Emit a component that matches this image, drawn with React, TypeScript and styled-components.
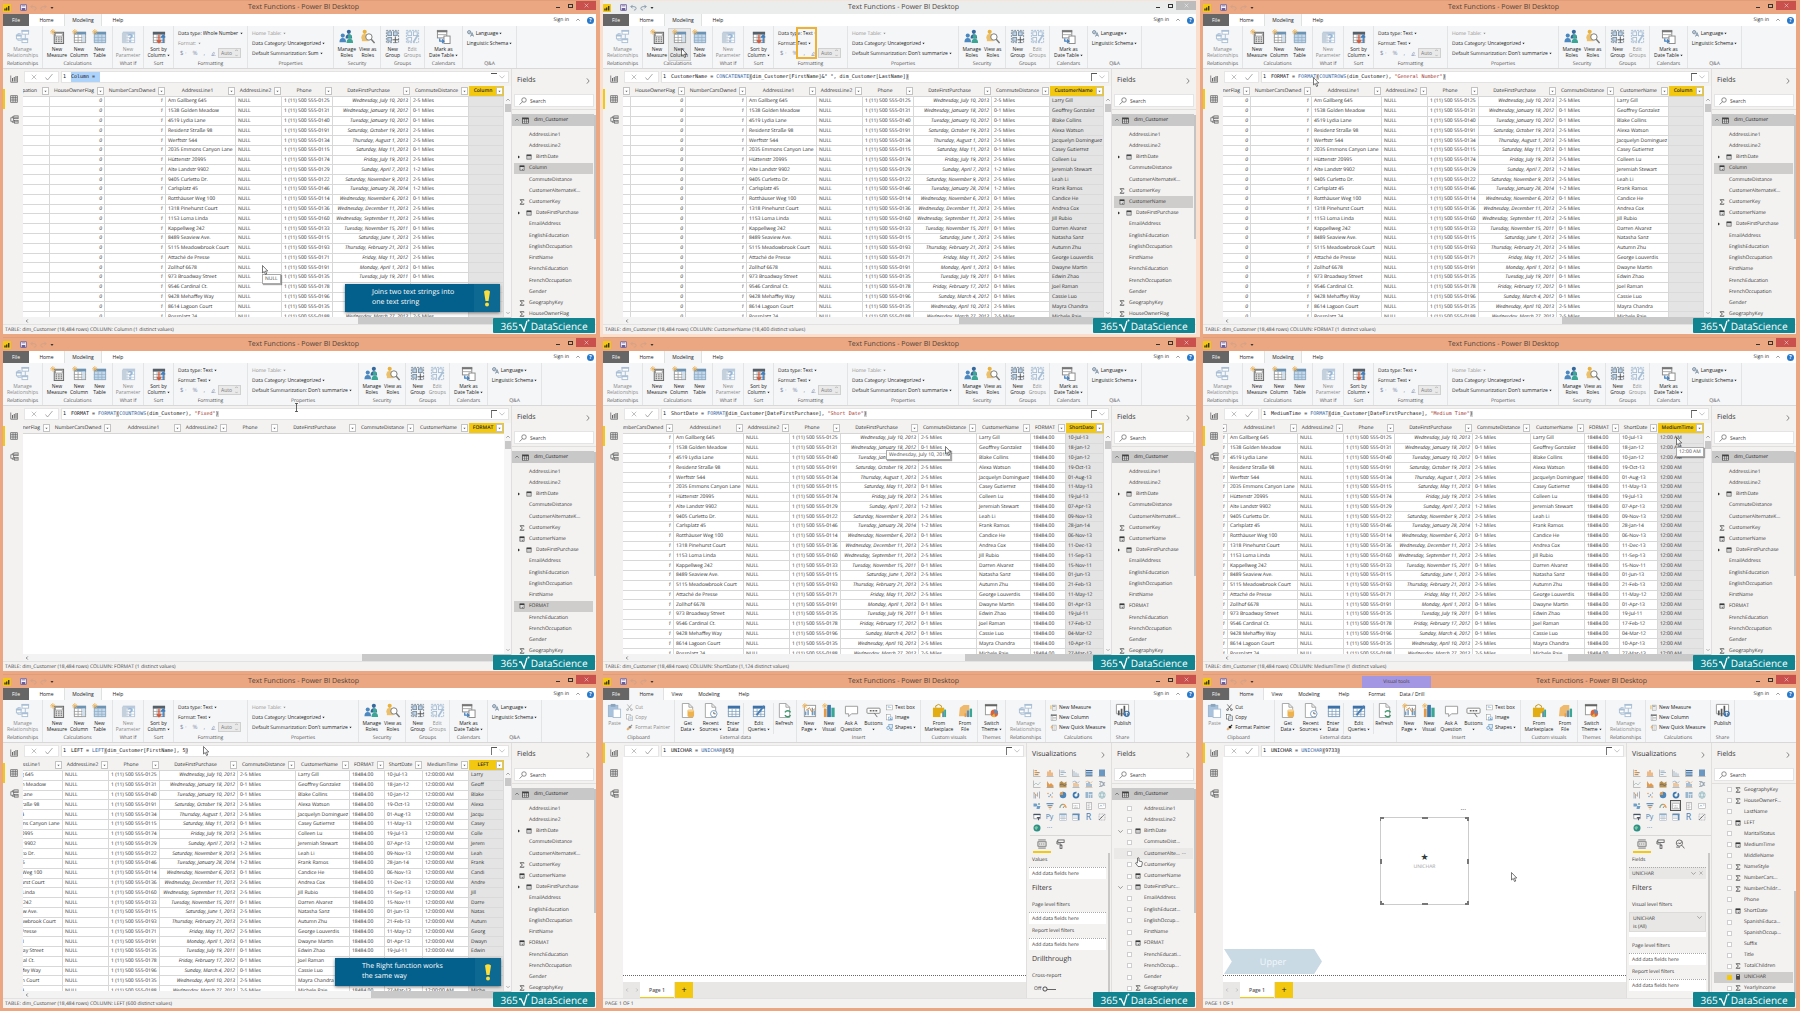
import React from "react";
import styled, { createGlobalStyle, css } from "styled-components";

const GlobalStyle = createGlobalStyle`
  *, *::before, *::after { box-sizing: border-box; }
  body {
    margin: 0;
    background: #eba781;
    color: #222;
    font: 5px/6px "Open Sans", "Noto Sans", sans-serif;
    text-rendering: geometricPrecision;
  }
  button, input, select {
    margin: 0; padding: 0; border: 0; border-radius: 0;
    background: none; color: inherit; font: inherit; line-height: inherit;
    appearance: none; text-align: inherit; outline: none;
  }
  svg { display: block; flex: none; }
`;

/* ---------- data ---------- */

type ColumnKey = "occ" | "house" | "cars" | "a1" | "a2" | "phone" | "date" | "commute" | "name" | "fmt" | "short" | "time" | "longtime" | "left" | "blank" | "newfmt";

const COLUMNS: Record<ColumnKey, { title: string; width: number; align?: "right"; italic?: boolean }> = {
  occ: { title: "EnglishOccupation", width: 62 },
  house: { title: "HouseOwnerFlag", width: 55, align: "right", italic: true },
  cars: { title: "NumberCarsOwned", width: 61, align: "right", italic: true },
  a1: { title: "AddressLine1", width: 70 },
  a2: { title: "AddressLine2", width: 46 },
  phone: { title: "Phone", width: 51 },
  date: { title: "DateFirstPurchase", width: 78, align: "right", italic: true },
  commute: { title: "CommuteDistance", width: 58 },
  name: { title: "CustomerName", width: 54 },
  fmt: { title: "FORMAT", width: 35 },
  short: { title: "ShortDate", width: 38 },
  time: { title: "MediumTime", width: 46 },
  longtime: { title: "MediumTime", width: 46 },
  left: { title: "LEFT", width: 35 },
  blank: { title: "Column", width: 35 },
  newfmt: { title: "FORMAT", width: 35 },
};

const CUSTOMERS: string[][] = [
  ["Am Gallberg 645", "0125", "Wednesday, July 10, 2013", "2-5", "Larry Gill", "10-Jul-13"],
  ["1538 Golden Meadow", "0131", "Wednesday, January 18, 2012", "0-1", "Geoffrey Gonzalez", "18-Jan-12"],
  ["4519 Lydia Lane", "0140", "Tuesday, January 10, 2012", "0-1", "Blake Collins", "10-Jan-12"],
  ["Residenz Straße 98", "0191", "Saturday, October 19, 2013", "2-5", "Alexa Watson", "19-Oct-13"],
  ["Werftstr 544", "0134", "Thursday, August 1, 2013", "2-5", "Jacquelyn Dominguez", "01-Aug-13"],
  ["2035 Emmons Canyon Lane", "0115", "Saturday, May 11, 2013", "0-1", "Casey Gutierrez", "11-May-13"],
  ["Hüttenstr 20995", "0174", "Friday, July 19, 2013", "2-5", "Colleen Lu", "19-Jul-13"],
  ["Alte Landstr 9902", "0129", "Sunday, April 7, 2013", "1-2", "Jeremiah Stewart", "07-Apr-13"],
  ["9405 Curletto Dr.", "0122", "Saturday, November 9, 2013", "2-5", "Leah Li", "09-Nov-13"],
  ["Carlsplatz 45", "0146", "Tuesday, January 28, 2014", "1-2", "Frank Ramos", "28-Jan-14"],
  ["Rotthäuser Weg 100", "0114", "Wednesday, November 6, 2013", "0-1", "Candice He", "06-Nov-13"],
  ["1318 Pinehurst Court", "0136", "Wednesday, December 11, 2013", "2-5", "Andrea Cox", "11-Dec-13"],
  ["1153 Loma Linda", "0160", "Wednesday, September 11, 2013", "2-5", "Jill Rubio", "11-Sep-13"],
  ["Kappellweg 242", "0133", "Tuesday, November 15, 2011", "0-1", "Darren Alvarez", "15-Nov-11"],
  ["8489 Seaview Ave.", "0115", "Saturday, June 1, 2013", "2-5", "Natasha Sanz", "01-Jun-13"],
  ["5115 Meadowbrook Court", "0193", "Thursday, February 21, 2013", "2-5", "Autumn Zhu", "21-Feb-13"],
  ["Attaché de Presse", "0171", "Friday, May 11, 2012", "2-5", "George Louverdis", "11-May-12"],
  ["Zollhof 6678", "0191", "Monday, April 1, 2013", "0-1", "Dwayne Martin", "01-Apr-13"],
  ["973 Broadway Street", "0135", "Tuesday, July 19, 2011", "0-1", "Edwin Zhao", "19-Jul-11"],
  ["9546 Cardinal Ct.", "0178", "Friday, February 17, 2012", "0-1", "Joel Raman", "17-Feb-12"],
  ["9428 Mehaffey Way", "0196", "Sunday, March 4, 2012", "0-1", "Cassie Luo", "04-Mar-12"],
  ["8614 Lagoon Court", "0135", "Wednesday, April 10, 2013", "2-5", "Mayra Chandra", "10-Apr-13"],
  ["Rossplatz 24", "0188", "Wednesday, March 27, 2013", "2-5", "Michele Raje", "27-Mar-13"],
];

function cellText(c: string[], key: ColumnKey): string {
  switch (key) {
    case "house": return "0";
    case "cars": return "1";
    case "a1": return c[0];
    case "a2": return "NULL";
    case "phone": return `1 (11) 500 555-${c[1]}`;
    case "date": return c[2];
    case "commute": return `${c[3]} Miles`;
    case "name": return c[4];
    case "fmt": return "18484.00";
    case "short": return c[5];
    case "time": return "12:00 AM";
    case "longtime": return "12:00:00 AM";
    case "left": return c[4].split(" ")[0].slice(0, 5);
    default: return "";
  }
}

/* ---------- icons ---------- */

const B = "#5b8fbe";
const G = "#8a8a8a";
const P = "#a9bfd6";
const Y = "#e8b23c";
const T = "#3aa693";
const O = "#e59a4a";

const grid = (head: string, line: string) => (
  <g>
    <rect x="2.5" y="3.5" width="12" height="11" fill="#fff" stroke={line} />
    <rect x="2" y="3" width="13" height="3" fill={head} />
    <path d="M2 9h13M2 12h13M6.5 6v9M10.5 6v9" stroke={line} strokeWidth=".8" />
  </g>
);
const spark = <path d="M3 0v6M0 3h6M1 1l4 4M5 1l-4 4" stroke="#edb75e" strokeWidth=".9" />;
const page = <path d="M2.500 .5h7l4 4v11h-11zM9.500 .5v4h4" fill="#fff" stroke="#9a9a9a" strokeWidth=".9" />;
const people = (x: number, y: number, c: string) => (
  <g fill={c}><circle cx={x} cy={y} r="2.200" /><path d={`M${x - 3.5} ${y + 7}q0-4.500 3.500-4.500t3.500 4.500z`} /></g>
);

const ICONS: Record<string, React.ReactNode> = {
  relationships: (
    <g fill="#fff" stroke={P}><path d="M6 5H3v7h4M11 3v8" fill="none" /><rect x="7.500" y="1.500" width="7" height="4" /><rect x="1.500" y="6.500" width="5" height="4" /><rect x="7.500" y="10.500" width="6" height="4" /><path d="M7 2h8M1 7h6M7 11h7" strokeWidth="1.800" /></g>
  ),
  measure: <g><rect x="4.500" y="3.500" width="10" height="12" fill="#ddd" stroke="#666" /><rect x="6" y="5" width="7" height="2.500" fill="#fff" stroke="#777" strokeWidth=".6" /><path d="M6 9.500h7M6 11.500h7M6 13.500h7" stroke="#666" strokeDasharray="1.500 1.200" />{spark}</g>,
  column: <g>{grid("#6d93b5", "#9a9a9a")}<path d="M11 6h3v8h-3z" fill="#cfe0ef" />{spark}</g>,
  newtable: <g>{grid("#6d93b5", "#93aabf")}<path d="M2 6h13v9H2z" fill="#8eb3d4" opacity=".5" />{spark}</g>,
  parameter: <g opacity=".8">{grid(P, P)}<path d="M1 4h5v11H1z" fill="#b9c8d6" /><text x="7" y="14" fontSize="12" fontWeight="700" fill="#7fa6cc">?</text></g>,
  sort: <g>{grid("#55606b", "#9a9a9a")}<path d="M8.500 6v8M6.500 12l2 2.500 2-2.500" stroke="#d4573a" strokeWidth="1.500" fill="none" /><path d="M13 15V7M11 9l2-2.500L15 9" stroke="#3f7fc0" strokeWidth="1.500" fill="none" /></g>,
  roles: <g>{people(10.5, 3, "#35699e")}{people(4, 7, "#4b88c0")}{people(11.5, 8, T)}</g>,
  viewroles: <g>{people(5, 3, Y)}<rect x="2" y="6" width="7" height="7" fill="#ecc06b" /><circle cx="9.500" cy="8.500" r="3.400" fill="#fff" stroke="#777" /><path d="M12 11l3.500 4" stroke="#777" strokeWidth="1.500" /></g>,
  group: <g fill="none" stroke="#7d8fa0"><rect x="1.500" y="1.500" width="13" height="13" strokeDasharray="2 1" /><rect x="3" y="3" width="4" height="4" fill="#bcd3e8" /><rect x="9" y="3" width="4" height="4" fill="#bcd3e8" /><rect x="3" y="9" width="4" height="4" fill="#bcd3e8" /><path d="M11 8v7M8 11.500h7" stroke="#555" /></g>,
  editgroup: <g fill="none" stroke={P}><rect x="1.500" y="1.500" width="13" height="13" strokeDasharray="2 1" /><rect x="3" y="3" width="4" height="4" /><rect x="9" y="3" width="4" height="4" /><rect x="3" y="9" width="4" height="4" /><path d="M14 6l-5 8" strokeWidth="2" /></g>,
  mark: <g><rect x="1.500" y="1.500" width="10" height="8" fill="#fff" stroke="#888" /><path d="M1 2.500h11" stroke="#777" strokeWidth="2" /><path d="M2 6h9" stroke="#aaa" /><rect x="8.500" y="7.500" width="6.500" height="8" fill="#fff" stroke="#888" /><path d="M4 10v3h4M6.500 11L8.500 13l-2 2" stroke="#3f7fc0" fill="none" strokeWidth="1.300" /></g>,
  language: <g fill="none" stroke="#55718d" strokeWidth="1.500"><circle cx="5" cy="5" r="3.800" /><path d="M1 5h8M5 1v8" strokeWidth=".8" /><path d="M8 15l3.500-9L15 15M9 12h5" /></g>,
  paste: <g><rect x="1.500" y="2.500" width="10" height="12" fill="#a9c3df" stroke="#9ab4cf" /><rect x="4" y="1" width="5" height="3" fill="#8ca5bd" /><rect x="6.500" y="6.500" width="8" height="9" fill="#fff" stroke={P} /></g>,
  cut: <g fill="none" stroke="currentColor" strokeWidth="1.300"><path d="M3 1l8 10M13 1L5 11" /><circle cx="3.500" cy="13" r="2" /><circle cx="12.500" cy="13" r="2" /></g>,
  copy: <g fill="#fff" stroke="currentColor"><rect x="1.500" y="1.500" width="8" height="10" /><rect x="6.500" y="4.500" width="8" height="11" /><path d="M8 8h5M8 10h5M8 12h5" stroke="#6fa0cf" /></g>,
  painter: <g><path d="M14 2L9 7" stroke="currentColor" strokeWidth="2.500" /><path d="M9 4l4 4-4 3-4-4z" fill="currentColor" /><path d="M1 12l4-5 4 4-5 4z" fill={O} opacity=".8" /></g>,
  decimals: <g fill="none" stroke="currentColor" strokeWidth="1.500"><path d="M3 14l3-8q4-5 5 0l-3 8zM1 15h14" /></g>,
  getdata: <g>{page}<path d="M8 8h7v6q-3.500 2.500-7 0z" fill="#edb24e" /><ellipse cx="11.500" cy="8" rx="3.500" ry="1.300" fill="#f6d08e" /></g>,
  recent: <g>{page}<circle cx="11.500" cy="11.500" r="3.500" fill="#fff" stroke="#7a9cc0" /><path d="M11.500 9.500v2h2" stroke="#666" fill="none" /></g>,
  enter: grid("#3d72a8", "#7f9fbe"),
  edit: <g>{grid("#3d72a8", "#7f9fbe")}<path d="M14 3L6 13" stroke="#4a7fb5" strokeWidth="2" /></g>,
  refresh: <g>{page}<path d="M14.500 10a3.500 3.500 0 0 0-6 0M8.500 13a3.500 3.500 0 0 0 6 0" stroke="#3c9a6c" strokeWidth="1.500" fill="none" /></g>,
  newpage: <g><rect x="2.500" y="2.500" width="12" height="12" fill="#fff" stroke="#999" /><path d="M4 13V9M6.500 13V7M11 13V5M13 13V8" stroke={B} strokeWidth="1.300" /><path d="M4 8l4-3 2 4 4-3" stroke="#d98b3a" fill="none" />{spark}</g>,
  newvisual: <g><path d="M2 6h3v9H2z" fill={O} /><path d="M5.500 2h4v13h-4z" fill="#3b78b0" /><path d="M10 5h3.500v10H10z" fill={T} />{spark}</g>,
  ask: <path d="M1.500 3.500h13v8H8l-3 3v-3H1.500z" fill="#fff" stroke="#999" />,
  buttons: <g><rect x="1" y="5.500" width="14" height="5.500" rx="1" fill="#fff" stroke="#888" /><path d="M4 8.300h8" stroke="#666" strokeWidth="1.500" strokeDasharray="2 1" /><path d="M9 11l3 4" stroke="#666" /></g>,
  textbox: <g><rect x="1.500" y="2.500" width="13" height="11" fill="#fff" stroke="#888" /><path d="M4 5.500h4M4 8h8" stroke={B} /></g>,
  image: <g><rect x="1.500" y="1.500" width="9" height="12" fill="#fff" stroke="#888" /><rect x="6" y="7" width="9" height="7" fill="#fff" stroke={B} /><path d="M7 13l3-4 2 2 1-1 2 3z" fill={B} /></g>,
  shapes: <g fill="#dceaf6" stroke={B} strokeWidth="1.300"><rect x="6.500" y="1.500" width="8" height="8" /><circle cx="5" cy="9" r="3.500" /><path d="M9 15l3-5 3 5z" /></g>,
  market: <g><path d="M1 5h12v10H1z" fill="#e2ad14" /><path d="M4 5V3q3-3 6 0v2" stroke="#c29213" fill="none" /><path d="M9 11h2v4H9z" fill="#fff" /><path d="M11 9h2v6h-2z" fill={B} /><path d="M13 7h2v8h-2z" fill={T} /></g>,
  fromfile: <g><path d="M2 5l4-3h6v12H1z" fill="#efb96e" /><path d="M7 11h2v4H7z" fill={O} /><path d="M9.500 8h2.500v7H9.500z" fill={B} /><path d="M12.500 6H15v9h-2.500z" fill={T} /></g>,
  theme: <g><rect x="1.500" y="1.500" width="12" height="11" fill="#fff" stroke="#999" /><path d="M1 2.500h13" stroke="#666" strokeWidth="2" /><circle cx="11" cy="11" r="4" fill="#d9643f" /><path d="M11 11V7a4 4 0 0 1 4 4z" fill={B} /><path d="M11 11l-3 3a4 4 0 0 0 4 1z" fill={Y} /></g>,
  smallmeasure: <g><rect x="5" y="2.500" width="9" height="12" fill="#fff" stroke="#888" /><path d="M6.500 5h6" stroke="#777" strokeWidth="2" /><path d="M6.500 9h6M6.500 12h6" stroke="#888" strokeDasharray="1.500 1" /><path d="M2 3v9" stroke={Y} strokeWidth="2" /></g>,
  smallcolumn: <g><rect x="2.500" y="1.500" width="12" height="13" fill="#fff" stroke="#777" /><path d="M2 3h13" stroke="#666" strokeWidth="2.500" /><path d="M6 2v12M7 8h7M7 11h7" stroke="#888" /></g>,
  quick: <g><rect x="6" y="2.500" width="8" height="12" fill="#fff" stroke="#888" /><path d="M7.500 5h5M7.500 9h5M7.500 12h5" stroke="#888" /><path d="M4 2L1 8h3l-1 5 4-7H4z" fill="#e4a04a" /></g>,
  publish: <g><path d="M1.500 1.500h13v10h-13z" fill="#fff" stroke="#999" /><path d="M4 13V8M7 14V6M10 13V3" stroke="#555" strokeWidth="1.800" /><circle cx="12.500" cy="11.500" r="3.300" fill="#3d72a8" /><path d="M12.500 13.500v-4M11 11l1.500-1.500L14 11" stroke="#fff" fill="none" /></g>,
  save: <g><path d="M1.500 1.500h13v13h-13z" fill="#fff" stroke="#6d5f9c" strokeWidth="2" /><path d="M4 9h8v6H4z" fill="#6d5f9c" /><path d="M4 2h8v4H4z" fill="#a99fc7" /></g>,
  undo: <path d="M6 2L2 6l4 4M2 6h7q5 0 5 4t-5 4" fill="none" stroke="currentColor" strokeWidth="2" />,
  redo: <path d="M10 2l4 4-4 4M14 6H7q-5 0-5 4t5 4" fill="none" stroke="currentColor" strokeWidth="2" />,
  report: <g fill="none" stroke="#666" strokeWidth="1.500"><path d="M1.500 1v13.500H15V2" /><path d="M5 13V6M8.500 13V4M12 13V2" strokeWidth="2" /></g>,
  data: <g fill="#fff" stroke="#555" strokeWidth="1.500"><rect x="1.500" y="1.500" width="13" height="13" /><path d="M1.500 5.500h13M1.500 10h13M6 2v12M10.500 2v12" /></g>,
  model: <g fill="none" stroke="#666" strokeWidth="1.300"><rect x="7" y="1.500" width="7.500" height="5" /><rect x="1.500" y="5" width="5" height="6" /><rect x="8" y="9.500" width="6.500" height="5" /><path d="M4 5V3h3M4 11v2h4M8 4h6M9 12h5" /></g>,
  tableglyph: <g><rect x="1.500" y="2" width="13" height="12" fill="#fff" stroke="#333" strokeWidth="1.500" /><path d="M1 4h14" stroke="#333" strokeWidth="3" /><path d="M1 9.500h14M6 4v10M10.500 4v10" stroke="#333" strokeWidth="1.300" /></g>,
  calendar: <g><path d="M2 2h12v12H2z" fill="#fff" stroke="#444" strokeWidth="1.500" /><path d="M2 4h12" stroke="#444" strokeWidth="4" /><path d="M4 9h8M4 12h8" stroke="#444" strokeWidth="1.300" strokeDasharray="2 1" /></g>,
  calc: <g><path d="M2 2h12v12H2z" fill="#fff" stroke="#444" strokeWidth="1.500" /><path d="M2 3.500h12" stroke="#333" strokeWidth="3.500" /><path d="M5 4v10M8 8h5M8 11l4 3M12 11l-4 3" stroke="#444" strokeWidth="1.300" /></g>,
  calcmeasure: <g><rect x="3" y="1" width="10" height="14" fill="#333" /><path d="M5 4h6" stroke="#fff" strokeWidth="2" /><path d="M5 8h6M5 11h6" stroke="#aaa" strokeDasharray="1.500 1" /></g>,
  search: <g fill="none" stroke="#555" strokeWidth="1.300"><circle cx="10" cy="6" r="4.500" /><path d="M7 9.500L1 15" /></g>,
  fieldwell: <g fill="none" stroke="#555" strokeWidth="1.200"><path d="M2 1.500h12M2 14.500h12" /><rect x="1.500" y="4.500" width="13" height="7" /><path d="M3 8h10" strokeDasharray="2 1" /></g>,
  roller: <g fill="none" stroke="#555" strokeWidth="1.300"><rect x="3" y="1.500" width="10" height="4" /><path d="M3 3.500H1.500V8H8v2" /><rect x="6.500" y="10" width="3" height="5" /></g>,
  analytics: <g fill="none" stroke="#555" strokeWidth="1.300"><circle cx="7" cy="6.500" r="5" /><path d="M11 10l4 5M4 8l2-2 2 2 3-4M2 13h6" /></g>,
  chev: <path d="M5 1l6 7-6 7" fill="none" stroke="currentColor" strokeWidth="1.500" />,
  down: <path d="M1 4l7 7 7-7" fill="none" stroke="currentColor" strokeWidth="1.500" />,
  up: <path d="M1 11l7-7 7 7" fill="none" stroke="currentColor" strokeWidth="1.800" />,
  left: <path d="M11 2L5 8l6 6" fill="none" stroke="currentColor" strokeWidth="2.500" />,
  x: <path d="M2 2l12 12M14 2L2 14" fill="none" stroke="currentColor" strokeWidth="1.400" />,
  check: <path d="M1 9l4 5L15 2" fill="none" stroke="currentColor" strokeWidth="1.400" />,
  caret: <path d="M2 4h12l-6 8z" fill="currentColor" />,
  right: <path d="M4 2l8 6-8 6z" fill="currentColor" />,
  sigma: <path d="M13 4V2H3l6 6-6 6h10v-2" fill="none" stroke="#333" strokeWidth="2" />,
};

type IconProps = { name: string; size?: number };
const Icon = ({ name, size = 8 }: IconProps) => (
  <svg width={size} height={size} viewBox="0 0 16 16" aria-hidden="true">{ICONS[name]}</svg>
);

const VISUALS: React.ReactNode[] = [
  <g><path d="M1 1v14h14" stroke={G} fill="none" /><path d="M3 3h5M3 7h10M3 11h8" stroke={O} strokeWidth="2.500" /><path d="M7 7h6M5 11h5" stroke={B} strokeWidth="1" /></g>,
  <g><path d="M1 15h14" stroke={G} /><path d="M4 14V5M8 14V2M12 14V7" stroke={O} strokeWidth="2.500" /></g>,
  <g><path d="M1 1v14h14" stroke={G} fill="none" /><path d="M3 4h8M3 7h11M3 11h6" stroke="#8ba7bf" strokeWidth="1.500" /></g>,
  <g><path d="M1 1v14h14" stroke={G} fill="none" /><path d="M4 14V4M8 14V7M12 14V9" stroke="#8ba7bf" strokeWidth="1.500" /></g>,
  <g><path d="M1 1v14h14" stroke={G} fill="none" /><path d="M2 3h13M2 7.500h13M2 12h13" stroke="#35699e" strokeWidth="2.500" /></g>,
  <g><path d="M1 15h14" stroke={G} /><path d="M4 14V1M8 14V1M12 14V1" stroke="#3f78ae" strokeWidth="3" /></g>,
  <g fill="none"><path d="M1 1v14h14" stroke={G} /><path d="M2 10l4-4 4 4 5-6" stroke="#7ba3a5" /></g>,
  <g><path d="M2 2l5 7 3-3 5 5v4H2z" fill={O} /><path d="M1 15h14" stroke={B} /></g>,
  <g><path d="M1 5l4-3 5 4 5-3v12H1z" fill="#b79152" /><path d="M1 10l5-2 5 3 4-2" stroke="#446" fill="none" /></g>,
  <g><path d="M4 14V6M8 14V4M12 14V8" stroke={O} strokeWidth="2" /><path d="M1 4l5-2 5 4 4-3M1 15h14" stroke={B} fill="none" /></g>,
  <g><path d="M4 14V6M8 14V4M12 14V8" stroke={B} strokeWidth="2" /><path d="M1 4l5-2 5 4 4-3M1 15h14" stroke={O} fill="none" /></g>,
  <g fill="none" stroke="#8b9aa5" strokeWidth="1.500"><path d="M2 3h5l7 9M2 13h5l7-9" /><circle cx="8" cy="8" r="4" /></g>,
  <g fill="none" stroke="#8b9aa5" strokeWidth="1.500"><path d="M2 2v13M5 6v9M9 3v8M13 1v14" /><path d="M2 4l7 6" stroke={O} /></g>,
  <g fill={O}><circle cx="4" cy="5" r="1.500" /><circle cx="9" cy="8" r="1.500" fill={B} /><circle cx="13" cy="4" r="1.200" fill={G} /><circle cx="6" cy="11" r="1.300" fill={B} /><circle cx="12" cy="12" r="1.500" /></g>,
  <g><circle cx="8" cy="8" r="6.500" fill="#4a86be" /><path d="M8 8V1.500a6.500 6.500 0 0 0-6.500 6.500z" fill={O} /></g>,
  <circle cx="8" cy="8" r="5" fill="none" stroke="#3f78ae" strokeWidth="3.500" strokeDasharray="24 3" />,
  <g><path d="M1 2h14v12H1z" fill="#9ab6cd" /><path d="M7 2v12M7 7h8M11 7v7" stroke="#fff" /></g>,
  <g fill="none" stroke="#76a8b5"><circle cx="8" cy="8" r="6.500" /><ellipse cx="8" cy="8" rx="3" ry="6.500" /><path d="M2 5.500h12M2 10.500h12" /></g>,
  <g fill="#6f9fc6"><path d="M1 3h6l2 3-2 3H1zM8 8h7l-2 6H7z" /><path d="M10 2h4v4h-4z" fill="#9bb" /></g>,
  <g fill="#6f93b5"><path d="M1 2h14v2.500H1z" /><path d="M3 6h10v2.500H3z" /><path d="M5 10h6v2H5zM7 13h2v2H7z" fill={O} /></g>,
  <g fill="none" strokeWidth="2.500"><path d="M2 12a6 6 0 0 1 6-7" stroke="#8a9" /><path d="M8 5a6 6 0 0 1 6 7" stroke={O} /><path d="M8 12l3-4" stroke="#555" strokeWidth="1.300" /></g>,
  <g fill="#fff" stroke="#9a9a9a"><rect x="1.500" y="2.500" width="13" height="11" /><path d="M4 6v3M7 6v3M10 6v3M4 11.500h8" /></g>,
  <g fill="#fff" stroke="#888"><rect x="2.500" y="1.500" width="11" height="13" /><path d="M5 4h6M5 7h4M5 10h6M5 12h4" /></g>,
  <g fill="#fff" stroke="#999"><rect x="1.500" y="2.500" width="13" height="10" /><path d="M4 9l2-3 2 3M10 6h3" stroke={B} /></g>,
  <g><path d="M1.500 2.500h13v9h-13z" fill="#fff" stroke="#456" /><path d="M1 3h14" stroke="#456" strokeWidth="2.500" /><path d="M7 8h8l-3 4v3l-2-1v-2z" fill="#556" /></g>,
  null,
  <g fill="#fff" stroke="#9ab"><rect x="1.500" y="1.500" width="13" height="13" /><path d="M1 3h14" stroke="#8fb0cc" strokeWidth="3" /><path d="M2 8h12M2 11h12M6 4v10M10 4v10" /></g>,
  <g fill="#fff" stroke="#9ab"><rect x="1.500" y="1.500" width="13" height="13" /><path d="M1 3h14M13 2v12" stroke="#5f8db5" strokeWidth="3" /><path d="M2 8h9M2 11h9" /></g>,
  null,
  <g fill="none" stroke="#889"><rect x="2" y="2" width="12" height="12" strokeDasharray="2 1" /><path d="M2 14L13 3M5 10l3-2" stroke="#555" strokeWidth="1.300" /></g>,
  <g><circle cx="8" cy="8" r="7" fill="#2d8f86" /><path d="M3 6l5-2 2 3-3 5-3-2z" fill="#7cc5a3" /></g>,
];

/* ---------- window frame ---------- */

const Sheet = styled.main`
  display: grid;
  grid-template-columns: repeat(3, minmax(0, 1fr));
  grid-template-rows: repeat(3, minmax(0, 1fr));
  height: 100vh;
`;
const Window = styled.section<{ $dim?: boolean }>`
  position: relative;
  display: flex;
  flex-direction: column;
  overflow: hidden;
  padding: 0 4px 3px 3px;
  background: ${(p) => (p.$dim ? "#fbdfce" : "#eba781")};
`;
const TitleBar = styled.header<{ $dim?: boolean }>`
  display: flex;
  height: 14px;
  flex: none;
  align-items: center;
  border-top: 1px solid ${(p) => (p.$dim ? "#f6e4d8" : "#e19d77")};
  background: ${(p) => (p.$dim ? "#ebedec" : "#eba781")};
  color: #4c423c;
`;
const QuickAccess = styled.div<{ $dim?: boolean }>`
  display: flex;
  align-items: center;
  gap: 3px;
  width: 52px;
  color: ${(p) => (p.$dim ? "#8092a8" : "#cfa18a")};
  button:first-of-type { margin-left: 6px; }
  button:last-child { color: #333; }
`;
const PlainButton = styled.button`display: flex; align-items: center; justify-content: center;`;
const Title = styled.h1`
  flex: 1;
  margin: 0;
  text-align: center;
  font: 7px/10px "Open Sans", "Noto Sans", sans-serif;
`;
const ContextTab = styled.div`
  display: flex;
  align-self: flex-end;
  align-items: center;
  justify-content: center;
  width: 69px;
  height: 12px;
  margin-left: 107px;
  background: #a397e3;
`;
const Controls = styled.div`display: flex; align-self: flex-start; align-items: center; color: #333;`;
const Control = styled.button<{ $close?: boolean; $dim?: boolean }>`
  display: flex;
  align-items: center;
  justify-content: center;
  width: 12px;
  height: 9px;
  ${(p) => p.$close && css`
    width: 20px;
    background: ${p.$dim ? "#bcbcbc" : "#c9504c"};
    color: #fff;
  `}
`;
const Minimize = styled.span`width: 4px; height: 1px; margin-top: 3px; background: currentColor;`;
const Maximize = styled.span`width: 5px; height: 4px; border: 1px solid currentColor;`;

const TabStrip = styled.nav`display: flex; height: 12px; flex: none; background: #fff;`;
const Tab = styled.button<{ $w: number; $active?: boolean; $file?: boolean }>`
  width: ${(p) => p.$w}px;
  text-align: center;
  ${(p) => p.$active && css`background: #f5f6f7; border: solid #e1e1e1; border-width: 0 1px;`}
  ${(p) => p.$file && css`background: #666; color: #fff;`}
`;
const Account = styled.div`
  display: flex;
  align-items: center;
  gap: 7px;
  margin-left: auto;
  padding-right: 2px;
  a { color: inherit; text-decoration: none; }
`;
const HelpButton = styled.button`
  width: 7px;
  height: 7px;
  border-radius: 50%;
  background: #2a78c8;
  color: #fff;
  text-align: center;
  font-weight: 700;
`;

/* ---------- ribbon ---------- */

const Ribbon = styled.div`
  display: flex;
  height: 43px;
  flex: none;
  border-bottom: 1px solid #d8d8d8;
  background: #f5f6f7;
`;
const Group = styled.section<{ $w: number }>`
  display: flex;
  flex-direction: column;
  width: ${(p) => p.$w}px;
  flex: none;
  padding: 3px 0 1px;
  border-right: 1px solid #e3e4e5;
`;
const GroupBody = styled.div`display: flex; flex: 1; justify-content: center; padding: 0 2px;`;
const GroupLabel = styled.h2`margin: 0; text-align: center; font: inherit; color: #555;`;
const BigButton = styled.button<{ $w: number; $off?: boolean; $hover?: boolean; $split?: boolean }>`
  display: flex;
  flex-direction: column;
  align-items: center;
  gap: 2px;
  width: ${(p) => p.$w}px;
  height: 31px;
  white-space: pre;
  text-align: center;
  color: ${(p) => (p.$off ? "#8c8c8c" : "#222")};
  ${(p) => p.$hover && css`background: #e6e7e8; box-shadow: 0 0 0 1px #d2d2d2;`}
  ${(p) => p.$split && css`border-left: 1px solid #e3e4e5;`}
`;
const CaretWrap = styled.span`display: inline-block; margin-left: 1px; vertical-align: middle;`;
const Caret = () => <CaretWrap><Icon name="caret" size={3} /></CaretWrap>;
const Lines = styled.div<{ $off?: boolean }>`
  display: flex;
  flex-direction: column;
  gap: 4px;
  flex: 1;
  padding: 1px 2px;
  white-space: nowrap;
  color: ${(p) => (p.$off ? "#8c8c8c" : "#222")};
`;
const SmallButton = styled.button`display: flex; align-items: center; gap: 2px; height: 6px;`;
const PickLabel = styled.label<{ $off?: boolean }>`
  display: flex;
  align-items: baseline;
  gap: 1px;
  height: 6px;
  color: ${(p) => (p.$off ? "#8c8c8c" : "#222")};
  svg { align-self: center; }
`;
const FormatRow = styled.div`
  display: flex;
  align-items: center;
  gap: 6px;
  height: 6px;
  padding-left: 2px;
  color: #7f8bad;
  font-size: 6px;
`;
const AutoBox = styled.label`
  display: flex;
  align-items: center;
  justify-content: space-between;
  width: 23px;
  height: 10px;
  margin-left: -4px;
  padding: 0 2px;
  border: 1px solid #d0d0d0;
  background: #e9e9e9;
  color: #777;
  font-size: 5px;
  input { width: 13px; }
`;
const Spin = styled.span`display: flex; flex-direction: column; gap: 2px; color: #555;`;

type Big = { w: number; icon: string; text: string; off?: boolean; caret?: boolean; hover?: boolean; split?: boolean };
const BigOne = ({ w, icon, text, off, caret, hover, split }: Big) => (
  <BigButton type="button" $w={w} $off={off} $hover={hover} $split={split}>
    <Icon name={icon} size={15} />
    <span>{text}{caret && <Caret />}</span>
  </BigButton>
);
const Pick = ({ label, value, off }: { label: string; value?: string; off?: boolean }) => (
  <PickLabel $off={off}>
    {label}
    <select defaultValue={value ?? ""}><option value={value ?? ""}>{value ?? ""}</option></select>
    <Icon name="caret" size={3} />
  </PickLabel>
);
const Small = ({ icon, text, caret }: { icon: string; text: string; caret?: boolean }) => (
  <SmallButton type="button"><Icon name={icon} size={7} /><span>{text}{caret && <Caret />}</span></SmallButton>
);

const ModelingRibbon = ({ dataType, format, summary, wide, hover }: { dataType: string; format?: string; summary: string; wide: boolean; hover?: boolean }) => (
  <Ribbon>
    <Group $w={40}><GroupBody><BigOne w={36} icon="relationships" text={"Manage\nRelationships"} off /></GroupBody><GroupLabel>Relationships</GroupLabel></Group>
    <Group $w={70}>
      <GroupBody>
        <BigOne w={23} icon="measure" text={"New\nMeasure"} />
        <BigOne w={21} icon="column" text={"New\nColumn"} hover={hover} />
        <BigOne w={20} icon="newtable" text={"New\nTable"} />
      </GroupBody>
      <GroupLabel>Calculations</GroupLabel>
    </Group>
    <Group $w={31}><GroupBody><BigOne w={27} icon="parameter" text={"New\nParameter"} off /></GroupBody><GroupLabel>What If</GroupLabel></Group>
    <Group $w={30}><GroupBody><BigOne w={26} icon="sort" text={"Sort by\nColumn"} caret /></GroupBody><GroupLabel>Sort</GroupLabel></Group>
    <Group $w={74}>
      <GroupBody>
        <Lines>
          <Pick label="Data type:" value={dataType} />
          <Pick label="Format:" value={format} off={!format} />
          <FormatRow>
            <span>$ ·</span><span>%</span><span>,</span><Icon name="decimals" size={5} />
            <AutoBox>
              <input aria-label="Decimal places" defaultValue="Auto" />
              <Spin><Icon name="up" size={3} /><Icon name="down" size={3} /></Spin>
            </AutoBox>
          </FormatRow>
        </Lines>
      </GroupBody>
      <GroupLabel>Formatting</GroupLabel>
    </Group>
    <Group $w={wide ? 111 : 86}>
      <GroupBody>
        <Lines>
          <Pick label="Home Table:" off />
          <Pick label="Data Category:" value="Uncategorized" />
          <Pick label="Default Summarization:" value={summary} />
        </Lines>
      </GroupBody>
      <GroupLabel>Properties</GroupLabel>
    </Group>
    <Group $w={47}>
      <GroupBody><BigOne w={22} icon="roles" text={"Manage\nRoles"} /><BigOne w={21} icon="viewroles" text={"View as\nRoles"} /></GroupBody>
      <GroupLabel>Security</GroupLabel>
    </Group>
    <Group $w={44}>
      <GroupBody><BigOne w={20} icon="group" text={"New\nGroup"} /><BigOne w={20} icon="editgroup" text={"Edit\nGroups"} off /></GroupBody>
      <GroupLabel>Groups</GroupLabel>
    </Group>
    <Group $w={38}><GroupBody><BigOne w={34} icon="mark" text={"Mark as\nDate Table"} caret /></GroupBody><GroupLabel>Calendars</GroupLabel></Group>
    <Group $w={54}>
      <GroupBody><Lines><Small icon="language" text="Language" caret /><SmallButton type="button"><span>Linguistic Schema<Caret /></span></SmallButton></Lines></GroupBody>
      <GroupLabel>Q&amp;A</GroupLabel>
    </Group>
  </Ribbon>
);

const HomeRibbon = ({ editable }: { editable?: boolean }) => (
  <Ribbon>
    <Group $w={72}>
      <GroupBody>
        <BigOne w={21} icon="paste" text="Paste" off />
        <Lines $off={!editable}><Small icon="cut" text="Cut" /><Small icon="copy" text="Copy" /><Small icon="painter" text="Format Painter" /></Lines>
      </GroupBody>
      <GroupLabel>Clipboard</GroupLabel>
    </Group>
    <Group $w={122}>
      <GroupBody>
        <BigOne w={22} icon="getdata" text={"Get\nData"} caret />
        <BigOne w={24} icon="recent" text={"Recent\nSources"} caret />
        <BigOne w={21} icon="enter" text={"Enter\nData"} />
        <BigOne w={30} icon="edit" text={"Edit\nQueries"} caret split />
        <BigOne w={21} icon="refresh" text="Refresh" split />
      </GroupBody>
      <GroupLabel>External data</GroupLabel>
    </Group>
    <Group $w={124}>
      <GroupBody>
        <BigOne w={20} icon="newpage" text={"New\nPage"} caret />
        <BigOne w={20} icon="newvisual" text={"New\nVisual"} />
        <BigOne w={24} icon="ask" text={"Ask A\nQuestion"} />
        <BigOne w={21} icon="buttons" text={"Buttons\n"} caret />
        <Lines><Small icon="textbox" text="Text box" /><Small icon="image" text="Image" /><Small icon="shapes" text="Shapes" caret /></Lines>
      </GroupBody>
      <GroupLabel>Insert</GroupLabel>
    </Group>
    <Group $w={57}>
      <GroupBody><BigOne w={32} icon="market" text={"From\nMarketplace"} /><BigOne w={20} icon="fromfile" text={"From\nFile"} /></GroupBody>
      <GroupLabel>Custom visuals</GroupLabel>
    </Group>
    <Group $w={28}><GroupBody><BigOne w={24} icon="theme" text={"Switch\nTheme"} caret /></GroupBody><GroupLabel>Themes</GroupLabel></Group>
    <Group $w={40}><GroupBody><BigOne w={36} icon="relationships" text={"Manage\nRelationships"} off /></GroupBody><GroupLabel>Relationships</GroupLabel></Group>
    <Group $w={65}>
      <GroupBody><Lines><Small icon="smallmeasure" text="New Measure" /><Small icon="smallcolumn" text="New Column" /><Small icon="quick" text="New Quick Measure" /></Lines></GroupBody>
      <GroupLabel>Calculations</GroupLabel>
    </Group>
    <Group $w={24}><GroupBody><BigOne w={20} icon="publish" text="Publish" /></GroupBody><GroupLabel>Share</GroupLabel></Group>
  </Ribbon>
);

/* ---------- work area ---------- */

const Body = styled.div`display: flex; flex: 1; min-height: 0; background: #f3f2f1;`;
const Rail = styled.nav`
  display: flex;
  flex-direction: column;
  width: 20px;
  flex: none;
  background: #f3f2f1;
`;
const RailButton = styled.button<{ $on?: boolean }>`
  display: flex;
  align-items: center;
  justify-content: center;
  height: 20px;
  border-left: 2px solid ${(p) => (p.$on ? "#f2c811" : "transparent")};
`;
const Work = styled.div`display: flex; flex: 1; flex-direction: column; min-width: 0;`;
const FormulaBar = styled.div`
  display: flex;
  height: 12px;
  margin: 2px 2px 0 1px;
  flex: none;
  gap: 2px;
`;
const FormulaButtons = styled.div`
  display: flex;
  align-items: center;
  justify-content: center;
  gap: 8px;
  width: 35px;
  border: 1px solid #e6e6e6;
  background: #fff;
  color: #888;
`;
const Editor = styled.div`
  display: flex;
  flex: 1;
  align-items: center;
  padding: 0 3px 0 1px;
  border: 1px solid #e3e3e3;
  background: #fff;
  color: #111;
  font: 5px/6px "DejaVu Sans Mono", "Liberation Mono", monospace;
  white-space: pre;
`;
const Code = styled.div`flex: 1; padding-left: 5px;`;
const Mark = styled.span<{ $kind: string }>`
  ${(p) => p.$kind === "f" && css`color: #35659f;`}
  ${(p) => p.$kind === "s" && css`color: #a3312b;`}
  ${(p) => p.$kind === "b" && css`background: #d4d4d4;`}
  ${(p) => p.$kind === "sel" && css`padding: 2px 2px 2px 0; background: #add3fb;`}
`;
const Minimap = styled.span<{ $short?: boolean }>`
  width: 6px;
  height: 8px;
  margin-right: 2px;
  border-top: 1px solid #555;
  border-left: ${(p) => (p.$short ? 0 : 1)}px solid #777;
`;
const Expand = styled.button`color: #999;`;

const GridArea = styled.div`display: flex; flex: 1; min-height: 0; margin-top: 3px; background: #fff;`;
const TableClip = styled.div`
  display: flex;
  flex: 1;
  min-width: 0;
  align-items: flex-start;
  justify-content: flex-end;
  overflow: hidden;
`;
const DataTable = styled.table<{ $w: number; $empty?: boolean }>`
  width: ${(p) => p.$w}px;
  height: ${(p) => (p.$empty ? "auto" : "236px")};
  flex: none;
  border-spacing: 0;
  table-layout: fixed;
  color: #2a2a2a;
`;
const Th = styled.th<{ $w: number; $on?: boolean }>`
  width: ${(p) => p.$w}px;
  height: 11px;
  padding: 0;
  border-bottom: 1px solid #d6d6d6;
  background: ${(p) => (p.$on ? "#f2c811" : "#f3f2f1")};
  font-weight: ${(p) => (p.$on ? 600 : 400)};
`;
const HeadCell = styled.div`
  display: flex;
  align-items: center;
  height: 10px;
  padding: 0 1px;
  span { flex: 1; min-width: 0; text-align: center; white-space: nowrap; }
`;
const FilterButton = styled.button`
  display: flex;
  align-items: center;
  justify-content: center;
  width: 7px;
  height: 8px;
  border: 1px solid #c3c3c3;
  background: #fff;
  color: #666;
`;
const Td = styled.td<{ $on?: boolean; $right?: boolean; $italic?: boolean }>`
  padding: 0 2px;
  border: solid #d8d8d8;
  border-width: 0 1px 1px 0;
  line-height: 6px;
  white-space: nowrap;
  text-align: ${(p) => (p.$right ? "right" : "left")};
  font-style: ${(p) => (p.$italic ? "italic" : "normal")};
  ${(p) => p.$on && css`background: #e4e4e4; border-color: #dadada;`}
`;
const VScroll = styled.div`
  display: flex;
  flex-direction: column;
  align-items: center;
  width: 7px;
  padding: 12px 0 2px;
  background: #f6f6f6;
  color: #444;
`;
const VThumb = styled.div`width: 6px; height: 8px; margin: 2px 0 auto; background: #c8c8c8;`;
const HScroll = styled.div`
  display: flex;
  align-items: center;
  height: 7px;
  flex: none;
  padding-left: 2px;
  background: #f3f3f3;
  color: #444;
`;
const HThumb = styled.div<{ $w: number }>`
  width: ${(p) => p.$w}px;
  height: 7px;
  margin-left: auto;
  background: #c9c9c9;
`;
const StatusBar = styled.footer`
  display: flex;
  align-items: center;
  height: 10px;
  flex: none;
  padding-left: 2px;
  border-top: 1px solid #e2e2e2;
  background: #f3f2f1;
  color: #444;
`;

/* ---------- panes ---------- */

const Pane = styled.aside`
  display: flex;
  flex-direction: column;
  width: 85px;
  flex: none;
  min-height: 0;
  border-left: 1px solid #e0dfde;
  background: #f3f2f1;
`;
const PaneHead = styled.div`
  display: flex;
  align-items: center;
  justify-content: space-between;
  height: 24px;
  flex: none;
  padding: 0 5px;
  color: #333;
  h2 { margin: 0; font: 7px/10px "Open Sans", "Noto Sans", sans-serif; }
`;
const SearchBox = styled.label`
  display: flex;
  align-items: center;
  gap: 3px;
  height: 13px;
  flex: none;
  margin: 1px 2px 2px;
  padding: 0 4px;
  border: 1px solid #e4e4e4;
  background: #fff;
  input { flex: 1; min-width: 0; }
  input::placeholder { color: #444; opacity: 1; }
`;
const ListFrame = styled.div`
  position: relative;
  display: flex;
  flex: 1;
  flex-direction: column;
  min-height: 0;
  overflow: hidden;
  border-top: 1px solid #e0dfde;
`;
const TableRow = styled.div`
  display: flex;
  align-items: center;
  gap: 3px;
  height: 12px;
  flex: none;
  margin: 4px 2px 3px 0;
  padding-left: 3px;
  background: #c8c8c8;
  color: #222;
  span { padding-left: 2px; }
`;
const List = styled.ul`
  display: flex;
  flex: 1;
  flex-direction: column;
  min-height: 0;
  margin: 0;
  padding: 0 3px 4px 2px;
  list-style: none;
`;
const Item = styled.li<{ $on?: boolean; $hover?: boolean }>`
  display: flex;
  flex: 1;
  align-items: center;
  white-space: nowrap;
  color: #333;
  ${(p) => p.$on && css`background: #cfcdcb;`}
  ${(p) => p.$hover && css`background: #eae9e8;`}
  label { display: flex; align-items: center; }
`;
const Slot = styled.span<{ $w: number }>`
  display: flex;
  align-items: center;
  justify-content: center;
  width: ${(p) => p.$w}px;
  flex: none;
`;
const Tick = styled.input`
  width: 5px;
  height: 5px;
  margin-right: 2px;
  border: 1px solid #cfcfcf;
  background: #fff;
  &:checked { border-color: #f2c811; background: #f2c811; }
`;
const ListThumb = styled.div<{ $top: number }>`
  position: absolute;
  top: ${(p) => p.$top}px;
  right: 0;
  width: 2px;
  height: 124px;
  background: #c4c4c4;
`;

type FieldKind = "cal" | "calc" | "sum" | "meas" | undefined;
type FieldRow = [string, FieldKind?];
const KIND_ICON: Record<string, string> = { cal: "calendar", calc: "calc", sum: "sigma", meas: "calcmeasure" };

const FieldItem = ({ row, on, report, hover }: { row: FieldRow; on?: boolean; report?: boolean; hover?: boolean }) => {
  const [name, kind] = row;
  if (report) {
    return (
      <Item $on={on} $hover={hover}>
        <Slot $w={13}>{kind === "cal" && <Icon name="down" size={5} />}</Slot>
        <label><Tick type="checkbox" defaultChecked={on} /><Slot $w={8}>{kind && <Icon name={KIND_ICON[kind]} size={6} />}</Slot><Slot $w={2} />{name}</label>
        {hover && <Slot $w={8}>···</Slot>}
      </Item>
    );
  }
  return (
    <Item $on={on}>
      {kind === "cal" ? (
        <><Slot $w={10}><Icon name="right" size={4} /></Slot><Slot $w={9}><Icon name="calendar" size={6} /></Slot><Slot $w={3} /></>
      ) : (
        <Slot $w={15}>{kind && <Icon name={KIND_ICON[kind]} size={6} />}</Slot>
      )}
      {name}
    </Item>
  );
};

const FieldsPane = ({ rows, selected, report, hover, scrolled }: { rows: FieldRow[]; selected?: string; report?: boolean; hover?: string; scrolled?: boolean }) => (
  <Pane>
    <PaneHead><h2>Fields</h2><PlainButton type="button" aria-label="Collapse Fields"><Icon name="chev" size={6} /></PlainButton></PaneHead>
    <SearchBox><Icon name="search" size={8} /><input type="search" aria-label="Search fields" placeholder="Search" /></SearchBox>
    <ListFrame>
      {!scrolled && <TableRow><Icon name="up" size={4} /><Icon name="tableglyph" size={7} /><span>dim_Customer</span></TableRow>}
      <List>
        {rows.map((r) => <FieldItem key={r[0]} row={r} on={r[0] === selected} report={report} hover={r[0] === hover} />)}
      </List>
      <ListThumb $top={scrolled ? 107 : 5} />
    </ListFrame>
  </Pane>
);

const IconGrid = styled.div`
  display: grid;
  grid-template-columns: repeat(6, 13px);
  grid-auto-rows: 11px;
  flex: none;
  margin-left: 3px;
  padding-bottom: 2px;
  border-bottom: 1px solid #d9d8d7;
`;
const VisualButton = styled.button<{ $on?: boolean; $r?: boolean }>`
  display: flex;
  align-items: center;
  justify-content: center;
  color: #4a7fb5;
  font-size: ${(p) => (p.$r ? 9 : 7)}px;
  ${(p) => p.$on && css`margin: 0 1px; border: 1px solid #555; background: #ddd;`}
`;
const WellTabs = styled.div`display: flex; gap: 1px; height: 17px; flex: none; padding: 0 6px;`;
const WellTab = styled.button<{ $on?: boolean }>`
  display: flex;
  align-items: center;
  justify-content: center;
  width: 18px;
  border-bottom: 2px solid ${(p) => (p.$on ? "#f2c811" : "transparent")};
`;
const WellBody = styled.div`
  display: flex;
  flex: 1;
  flex-direction: column;
  min-height: 0;
  overflow: hidden;
  margin-right: 1px;
  padding-right: 2px;
  border-right: 2px solid #c9c8c7;
  color: #333;
`;
const WellLabel = styled.div`flex: none; padding: 4px 4px 4px 5px; line-height: 6px;`;
const WellHead = styled.h3`flex: none; margin: 0; padding: 5px 5px 4px; font: 7px/10px "Open Sans", "Noto Sans", sans-serif;`;
const DropZone = styled.div<{ $filled?: boolean }>`
  display: flex;
  align-items: center;
  justify-content: space-between;
  height: 12px;
  flex: none;
  margin-left: 2px;
  padding: 0 3px;
  border-top: 1px dotted #aaa;
  background: ${(p) => (p.$filled ? "#e8e7e6" : "#fff")};
`;
const FilterCard = styled.div`
  display: flex;
  justify-content: space-between;
  flex: none;
  height: 20px;
  margin: 0 0 7px 2px;
  padding: 2px 3px;
  border: 1px solid #dcdbda;
  background: #e8e7e6;
  box-shadow: 0 5px #fff;
  line-height: 8px;
  white-space: pre;
`;
const ToggleLabel = styled.label`display: flex; align-items: center; gap: 1px; padding: 3px 0 0 7px; line-height: 6px;`;
const Toggle = styled.input`
  width: 14px;
  height: 6px;
  background: radial-gradient(circle at 3px 3px, #f3f2f1 1px, #555 2px, transparent 3px), linear-gradient(#666, #666) 5px 3px / 9px 1px no-repeat;
`;
const ToolRow = styled.div`display: flex; gap: 3px; color: #555;`;

const VisualizationsPane = ({ card }: { card?: boolean }) => (
  <Pane>
    <PaneHead><h2>Visualizations</h2><PlainButton type="button" aria-label="Collapse Visualizations"><Icon name="chev" size={6} /></PlainButton></PaneHead>
    <IconGrid>
      {VISUALS.map((v, i) => (
        <VisualButton key={i} type="button" aria-label={`Visual ${i + 1}`} $on={card && i === 21} $r={i === 28}>
          {i === 25 ? "Py" : i === 28 ? "R" : <svg width="8" height="8" viewBox="0 0 16 16">{v}</svg>}
        </VisualButton>
      ))}
      <VisualButton type="button" aria-label="More visuals">···</VisualButton>
    </IconGrid>
    <WellTabs>
      <WellTab type="button" aria-label="Fields" $on><Icon name="fieldwell" size={10} /></WellTab>
      <WellTab type="button" aria-label="Format"><Icon name="roller" size={10} /></WellTab>
      {card && <WellTab type="button" aria-label="Analytics"><Icon name="analytics" size={10} /></WellTab>}
    </WellTabs>
    <WellBody>
      <WellLabel>{card ? "Fields" : "Values"}</WellLabel>
      {card ? (
        <DropZone $filled>UNICHAR<ToolRow><Icon name="down" size={5} /><Icon name="x" size={4} /></ToolRow></DropZone>
      ) : (
        <DropZone>Add data fields here</DropZone>
      )}
      <WellHead>Filters</WellHead>
      {card && (
        <>
          <WellLabel>Visual level filters</WellLabel>
          <FilterCard>{"UNICHAR\nis (All)"}<ToolRow><Icon name="down" size={5} /></ToolRow></FilterCard>
        </>
      )}
      <WellLabel>Page level filters</WellLabel>
      <DropZone>Add data fields here</DropZone>
      <WellLabel>Report level filters</WellLabel>
      <DropZone>Add data fields here</DropZone>
      {!card && (
        <>
          <WellHead>Drillthrough</WellHead>
          <WellLabel>Cross-report</WellLabel>
          <ToggleLabel>Off<Toggle type="checkbox" /></ToggleLabel>
        </>
      )}
    </WellBody>
  </Pane>
);

/* ---------- report canvas ---------- */

const Canvas = styled.div`position: relative; flex: 1; border-bottom: 1px dotted #666; background: #fff;`;
const PageBar = styled.div`display: flex; height: 22px; flex: none; padding-top: 6px; background: linear-gradient(#fff 6px, #e8e7e6 6px);`;
const PageArrows = styled.div`display: flex; align-items: center; justify-content: center; gap: 6px; width: 17px; color: #aaa; svg:last-child { transform: rotate(180deg); }`;
const PageTab = styled.button`width: 34px; border-bottom: 1px solid #f2c811; background: #fff; text-align: center; font-weight: 600; color: #555;`;
const AddPage = styled.button`width: 18px; margin-left: 1px; background: #f2c811; text-align: center; font-size: 9px;`;

const CardVisual = styled.div`
  position: absolute;
  top: 60px;
  left: 157px;
  display: flex;
  flex-direction: column;
  align-items: center;
  justify-content: center;
  width: 89px;
  height: 88px;
  border: 1px solid #ccc;
  color: #999;
`;
const Star = styled.div`color: #2f3b3b; font: 9px/12px "DejaVu Sans", sans-serif;`;
const HandleLayer = styled.svg`position: absolute; inset: -1px;`;
const More = styled.span`position: absolute; top: -10px; right: 2px; color: #444; font-size: 7px;`;
const UpperBanner = styled.div`
  position: absolute;
  bottom: 1px;
  left: 1px;
  width: 98px;
  height: 25px;
  clip-path: polygon(0 0, 92% 0, 100% 50%, 92% 100%, 0 100%, 8% 50%);
  background: #c9dae5;
  color: #f2f7fa;
  text-align: center;
  font-size: 9px;
  line-height: 25px;
`;

/* ---------- overlays ---------- */

const Floating = styled.div<{ $x: number; $y: number }>`
  position: absolute;
  left: ${(p) => p.$x}px;
  top: ${(p) => p.$y}px;
`;
const Tip = styled(Floating)`
  padding: 1px 2px;
  border: 1px solid #aaa;
  background: #fff;
  box-shadow: 1px 1px 1px rgba(0, 0, 0, 0.35);
  white-space: nowrap;
  color: #444;
`;
const Callout = styled(Floating)<{ $w: number }>`
  display: flex;
  align-items: center;
  width: ${(p) => p.$w}px;
  height: 28px;
  background: linear-gradient(90deg, #03608c 0, #03608c calc(100% - 26px), #0d6991 calc(100% - 26px));
  box-shadow: 0 1px 3px rgba(0, 0, 0, 0.5);
  color: #fff;
  font-size: 7px;
  line-height: 10px;
  white-space: pre;
  p { flex: 1; margin: 0; padding-left: 27px; }
  svg { margin-right: 10px; }
`;
const Highlight = styled(Floating)`width: 21px; height: 32px; border: 2px solid #f0b030;`;
const Brand = styled.div`
  position: absolute;
  right: 5px;
  bottom: 4px;
  display: flex;
  align-items: center;
  justify-content: center;
  width: 102px;
  height: 15px;
  border-radius: 1px;
  background: #12848f;
  color: #fff;
  font-size: 10px;
  font-weight: 500;
  line-height: 14px;
`;

type PointerKind = "arrow" | "beam" | "hand";
const Pointer = ({ x, y, kind = "arrow" }: { x: number; y: number; kind?: PointerKind }) => (
  <Floating $x={x} $y={y}>
    {kind === "arrow" && <svg width="6" height="10" viewBox="0 0 12 20"><path d="M1 1v15l3.500-3L7 19l2.500-1L7 12h4.500z" fill="#fff" stroke="#333" strokeWidth="1.300" /></svg>}
    {kind === "beam" && <svg width="5" height="9" viewBox="0 0 10 18"><path d="M2 1h6M2 17h6M5 1v16" stroke="#333" strokeWidth="1.500" /></svg>}
    {kind === "hand" && <svg width="8" height="10" viewBox="0 0 16 20"><path d="M5 11V2q1.500-1.500 3 0v6l6 1.500q1 1 .5 4L13 19H6l-5-7q1-2 4 0z" fill="#fff" stroke="#333" strokeWidth="1.300" /></svg>}
  </Floating>
);

/* ---------- scenes ---------- */

type Token = [string, string];
type Scene = {
  view: "data" | "report";
  dim?: boolean;
  card?: boolean;
  dataType?: string;
  format?: string;
  summary?: string;
  hover?: boolean;
  code: Token[];
  columns?: ColumnKey[];
  empty?: boolean;
  thumb?: number;
  fields: FieldRow[];
  selected?: string;
  status: string;
  overlay?: React.ReactNode;
};

const HEAD: FieldRow[] = [["AddressLine1"], ["AddressLine2"], ["BirthDate", "cal"]];
const MID: FieldRow[] = [["CommuteDistance"], ["CustomerAlternateK..."], ["CustomerKey", "sum"]];
const NAME: FieldRow = ["CustomerName", "calc"];
const COL: FieldRow = ["Column", "calc"];
const FMT: FieldRow = ["FORMAT", "calc"];
const AFTER: FieldRow[] = [["DateFirstPurchase", "cal"], ["EmailAddress"], ["EnglishEducation"], ["EnglishOccupation"], ["FirstName"]];
const TAIL: FieldRow[] = [["FrenchEducation"], ["FrenchOccupation"], ["Gender"], ["GeographyKey", "sum"]];
const HOUSE: FieldRow = ["HouseOwnerFlag", "sum"];
const WITH_FORMAT: FieldRow[] = [...HEAD, ...MID, NAME, ...AFTER, FMT, ...TAIL];

const REPORT_FIELDS: FieldRow[] = [
  ["AddressLine1"], ["AddressLine2"], ["BirthDate", "cal"], ["CommuteDist..."], ["CustomerAlte..."], ["CustomerKey"], ["CustomerName", "calc"],
  ["DateFirstPurc...", "cal"], ["EmailAddress"], ["EnglishEducat..."], ["EnglishOccup..."], ["FirstName"], ["FORMAT", "calc"],
  ["FrenchEducati..."], ["FrenchOccup..."], ["Gender"], ["GeographyKey", "sum"],
];
const SCROLLED_FIELDS: FieldRow[] = [
  ["GeographyKey", "sum"], ["HouseOwnerF...", "sum"], ["LastName"], ["LEFT", "calc"], ["MaritalStatus"], ["MediumTime", "calc"], ["MiddleName"],
  ["NameStyle", "sum"], ["NumberCars...", "sum"], ["NumberChildr...", "sum"], ["Phone"], ["ShortDate", "calc"], ["SpanishEduca..."],
  ["SpanishOccup..."], ["Suffix"], ["Title"], ["TotalChildren", "sum"], ["UNICHAR", "meas"], ["YearlyIncome", "sum"],
];

const SCENES: Scene[] = [
  {
    view: "data", dataType: "Whole Number", summary: "Sum", thumb: 153,
    code: [["Column = ", "sel"]],
    columns: ["occ", "house", "cars", "a1", "a2", "phone", "date", "commute", "blank"],
    fields: [...HEAD, COL, ...MID, ...AFTER, ...TAIL, HOUSE], selected: "Column",
    status: "TABLE: dim_Customer (18,484 rows) COLUMN: Column (1 distinct values)",
    overlay: (
      <>
        <Tip $x={262} $y={274}>NULL</Tip><Pointer x={262} y={265} />
        <Callout $x={345} $y={284} $w={155}><p>{"Joins two text strings into\none text string"}</p><Bang /></Callout>
      </>
    ),
  },
  {
    view: "data", dim: true, dataType: "Text", format: "Text", summary: "Don't summarize", hover: true, thumb: 152,
    code: [["CustomerName = ", ""], ["CONCATENATE", "f"], ["(", "b"], ['dim_Customer[FirstName]&" ", dim_Customer[LastName]', ""], [")", "b"]],
    columns: ["occ", "house", "cars", "a1", "a2", "phone", "date", "commute", "name"],
    fields: [...HEAD, ...MID, NAME, ...AFTER, ...TAIL, HOUSE], selected: "CustomerName",
    status: "TABLE: dim_Customer (18,484 rows) COLUMN: CustomerName (18,400 distinct values)",
    overlay: <><Highlight $x={196} $y={27} /><Pointer x={81} y={48} /></>,
  },
  {
    view: "data", dataType: "Text", format: "Text", summary: "Don't summarize", thumb: 149,
    code: [["FORMAT = ", ""], ["FORMAT", "f"], ["(", "b"], ["COUNTROWS", "f"], ["(dim_Customer), ", ""], ['"General Number"', "s"], [")", "b"]],
    columns: ["house", "cars", "a1", "a2", "phone", "date", "commute", "name", "blank"],
    fields: [...HEAD, COL, ...MID, NAME, ...AFTER, ...TAIL], selected: "Column",
    status: "TABLE: dim_Customer (18,484 rows) COLUMN: FORMAT (1 distinct values)",
    overlay: <Pointer x={113} y={77} />,
  },
  {
    view: "data", dataType: "Text", format: "Text", summary: "Don't summarize", thumb: 149, empty: true,
    code: [["FORMAT = ", ""], ["FORMAT", "f"], ["(", "b"], ["COUNTROWS", "f"], ["(dim_Customer), ", ""], ['"Fixed"', "s"], [")", "b"]],
    columns: ["house", "cars", "a1", "a2", "phone", "date", "commute", "name", "newfmt"],
    fields: WITH_FORMAT, selected: "FORMAT",
    status: "TABLE: dim_Customer (18,484 rows) COLUMN: FORMAT (1 distinct values)",
    overlay: <Pointer x={294} y={66} kind="beam" />,
  },
  {
    view: "data", dataType: "Text", format: "Text", summary: "Don't summarize", thumb: 146,
    code: [["ShortDate = ", ""], ["FORMAT", "f"], ["(", "b"], ["dim_Customer[DateFirstPurchase], ", ""], ['"Short Date"', "s"], [")", "b"]],
    columns: ["cars", "a1", "a2", "phone", "date", "commute", "name", "fmt", "short"],
    fields: WITH_FORMAT,
    status: "TABLE: dim_Customer (18,484 rows) COLUMN: ShortDate (1,124 distinct values)",
    overlay: <><Tip $x={286} $y={113}>Wednesday, July 10, 2013</Tip><Pointer x={345} y={109} /></>,
  },
  {
    view: "data", dataType: "Text", format: "Text", summary: "Don't summarize", thumb: 143,
    code: [["MediumTime = ", ""], ["FORMAT", "f"], ["(", "b"], ["dim_Customer[DateFirstPurchase], ", ""], ['"Medium Time"', "s"], [")", "b"]],
    columns: ["cars", "a1", "a2", "phone", "date", "commute", "name", "fmt", "short", "time"],
    fields: WITH_FORMAT,
    status: "TABLE: dim_Customer (18,484 rows) COLUMN: MediumTime (1 distinct values)",
    overlay: <><Tip $x={476} $y={110}>12:00 AM</Tip><Pointer x={476} y={100} /></>,
  },
  {
    view: "data", dataType: "Text", format: "Text", summary: "Don't summarize", thumb: 140,
    code: [["LEFT = ", ""], ["LEFT", "f"], ["(", "b"], ["dim_Customer[FirstName], 5", ""], [")", "b"]],
    columns: ["a1", "a2", "phone", "date", "commute", "name", "fmt", "short", "longtime", "left"],
    fields: WITH_FORMAT,
    status: "TABLE: dim_Customer (18,484 rows) COLUMN: LEFT (600 distinct values)",
    overlay: (
      <>
        <Pointer x={203} y={72} />
        <Callout $x={335} $y={284} $w={166}><p>{"The Right function works\nthe same way"}</p><Bang /></Callout>
      </>
    ),
  },
  {
    view: "report",
    code: [["UNICHAR = ", ""], ["UNICHAR", "f"], ["(", "b"], ["65", ""], [")", "b"]],
    fields: REPORT_FIELDS, status: "PAGE 1 OF 1",
    overlay: <Pointer x={535} y={183} kind="hand" />,
  },
  {
    view: "report", card: true,
    code: [["UNICHAR = ", ""], ["UNICHAR", "f"], ["(", "b"], ["9733", ""], [")", "b"]],
    fields: SCROLLED_FIELDS, selected: "UNICHAR", status: "PAGE 1 OF 1",
    overlay: <Pointer x={311} y={198} />,
  },
];

function Bang() {
  return (
    <svg width="6" height="17" viewBox="0 0 6 17" aria-hidden="true">
      <path d="M0 1.500Q3-1 6 1.500L4.500 11h-3z" fill="#fbdd3d" /><circle cx="3" cy="14.500" r="2" fill="#fbdd3d" />
    </svg>
  );
}

const Grid = ({ columns, empty }: { columns: ColumnKey[]; empty?: boolean }) => {
  const last = columns.length - 1;
  const width = columns.reduce((sum, k) => sum + COLUMNS[k].width, 0);
  return (
    <DataTable $w={width} $empty={empty}>
      <thead>
        <tr>
          {columns.map((k, i) => (
            <Th key={k} $w={COLUMNS[k].width} $on={i === last}>
              <HeadCell>
                <span>{COLUMNS[k].title}</span>
                <FilterButton type="button" aria-label={`Filter ${COLUMNS[k].title}`}><Icon name="caret" size={3} /></FilterButton>
              </HeadCell>
            </Th>
          ))}
        </tr>
      </thead>
      {!empty && (
        <tbody>
          {CUSTOMERS.map((c) => (
            <tr key={c[0]}>
              {columns.map((k, i) => (
                <Td key={k} $on={i === last} $right={COLUMNS[k].align === "right"} $italic={COLUMNS[k].italic}>{cellText(c, k)}</Td>
              ))}
            </tr>
          ))}
        </tbody>
      )}
    </DataTable>
  );
};

const AppWindow = ({ scene, first }: { scene: Scene; first: boolean }) => {
  const report = scene.view === "report";
  return (
    <Window $dim={scene.dim}>
      <TitleBar $dim={scene.dim}>
        <QuickAccess $dim={scene.dim}>
          <svg width="8" height="8" viewBox="0 0 16 16"><rect width="16" height="16" rx="1" fill="#f2c811" /><path d="M4 13V9M7.500 13V7M11.500 13V4" stroke="#222" strokeWidth="2.500" /></svg>
          <PlainButton type="button" aria-label="Save"><Icon name="save" size={7} /></PlainButton>
          <PlainButton type="button" aria-label="Undo"><Icon name="undo" size={7} /></PlainButton>
          <PlainButton type="button" aria-label="Redo"><Icon name="redo" size={7} /></PlainButton>
          <PlainButton type="button" aria-label="Customize toolbar"><Icon name="caret" size={4} /></PlainButton>
        </QuickAccess>
        {scene.card && <ContextTab>Visual tools</ContextTab>}
        <Title>Text Functions - Power BI Desktop</Title>
        <Controls>
          <Control type="button" aria-label="Minimize"><Minimize /></Control>
          <Control type="button" aria-label="Maximize"><Maximize /></Control>
          <Control type="button" aria-label="Close" $close $dim={scene.dim}><Icon name="x" size={5} /></Control>
        </Controls>
      </TitleBar>
      <TabStrip>
        <Tab type="button" $w={26} $file>File</Tab>
        <Tab type="button" $w={35} $active={report}>Home</Tab>
        {report && <Tab type="button" $w={26}>View</Tab>}
        <Tab type="button" $w={38} $active={!report}>Modeling</Tab>
        <Tab type="button" $w={32}>Help</Tab>
        {scene.card && <><Tab type="button" $w={34}>Format</Tab><Tab type="button" $w={36}>Data / Drill</Tab></>}
        <Account><a href="#signin">Sign in</a><Icon name="up" size={4} /><HelpButton type="button" aria-label="Help">?</HelpButton></Account>
      </TabStrip>
      {report ? <HomeRibbon editable={scene.card} /> : (
        <ModelingRibbon dataType={scene.dataType ?? ""} format={scene.format} summary={scene.summary ?? ""} wide={!first} hover={scene.hover} />
      )}
      <Body>
        <Rail>
          <RailButton type="button" aria-label="Report view" $on={report}><Icon name="report" size={8} /></RailButton>
          <RailButton type="button" aria-label="Data view" $on={!report}><Icon name="data" size={8} /></RailButton>
          <RailButton type="button" aria-label="Model view"><Icon name="model" size={9} /></RailButton>
        </Rail>
        <Work>
          <FormulaBar>
            <FormulaButtons>
              <PlainButton type="button" aria-label="Cancel"><Icon name="x" size={6} /></PlainButton>
              <PlainButton type="button" aria-label="Commit"><Icon name="check" size={8} /></PlainButton>
            </FormulaButtons>
            <Editor>
              <span>1</span>
              <Code role="textbox" aria-label="Formula">{scene.code.map(([t, k], i) => <Mark key={i} $kind={k}>{t}</Mark>)}</Code>
              <Minimap $short={first} />
              <Expand type="button" aria-label="Expand formula bar"><Icon name="down" size={6} /></Expand>
            </Editor>
          </FormulaBar>
          {report ? (
            <>
              <Canvas>
                {scene.card && (
                  <>
                    <CardVisual>
                      <HandleLayer width="89" height="88" viewBox="0 0 89 88"><path d="M0 4V1h4M42 1h6M85 1h3v3M88 42v5M88 84v3h-3M48 87h-6M4 87H1v-3M1 47v-5" fill="none" stroke="#777" strokeWidth="2" /></HandleLayer>
                      <More>···</More>
                      <Star>★</Star>
                      <span>UNICHAR</span>
                    </CardVisual>
                    <UpperBanner>Upper</UpperBanner>
                  </>
                )}
              </Canvas>
              <PageBar>
                <PageArrows><Icon name="left" size={4} /><Icon name="left" size={4} /></PageArrows>
                <PageTab type="button">Page 1</PageTab>
                <AddPage type="button" aria-label="New page">+</AddPage>
              </PageBar>
            </>
          ) : (
            <>
              <GridArea>
                <TableClip><Grid columns={scene.columns ?? []} empty={scene.empty} /></TableClip>
                <VScroll><Icon name="up" size={4} /><VThumb /><Icon name="down" size={4} /></VScroll>
              </GridArea>
              <HScroll><Icon name="left" size={4} /><HThumb $w={scene.thumb ?? 150} /></HScroll>
            </>
          )}
        </Work>
        {report && <VisualizationsPane card={scene.card} />}
        <FieldsPane rows={scene.fields} selected={scene.selected} report={report} hover={report && !scene.card ? "CustomerAlte..." : undefined} scrolled={scene.card} />
      </Body>
      <StatusBar>{scene.status}</StatusBar>
      {scene.overlay}
      <Brand>
        365
        <svg width="13" height="13" viewBox="0 0 13 13" aria-hidden="true"><path d="M1 6h2l3 6 3-10" fill="none" stroke="#fff" strokeWidth="1.300" /><circle cx="10.500" cy="1.500" r="1" fill="#fff" /></svg>
        DataScience
      </Brand>
    </Window>
  );
};

export default function App() {
  return (
    <>
      <GlobalStyle />
      <Sheet>{SCENES.map((s, i) => <AppWindow key={i} scene={s} first={i === 0} />)}</Sheet>
    </>
  );
}
